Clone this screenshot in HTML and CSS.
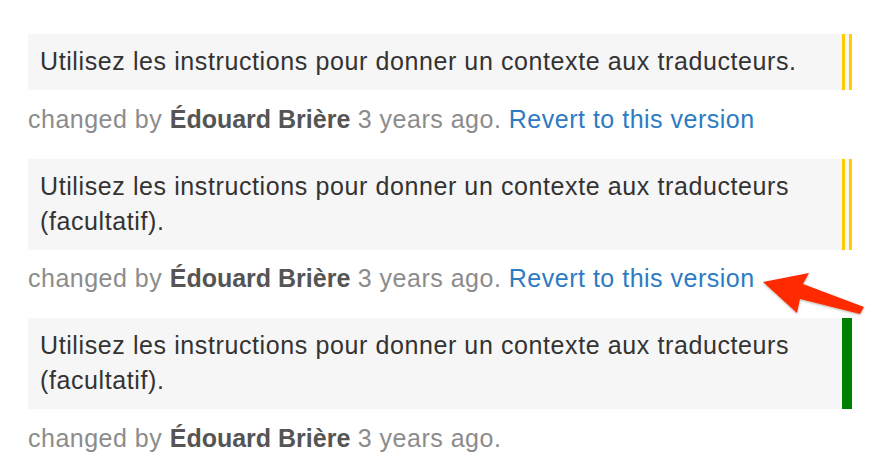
FILE: index.html
```html
<!DOCTYPE html>
<html lang="fr">
<head>
<meta charset="utf-8">
<link rel="stylesheet" href="styles.css">
</head>
<body>
<div class="history">
  <div class="entry">
    <div class="text changed">Utilisez les instructions pour donner un contexte aux traducteurs.</div>
    <div class="meta">changed by <strong>Édouard Brière</strong> 3 years ago. <a href="#">Revert to this version</a></div>
  </div>
  <div class="entry">
    <div class="text changed">Utilisez les instructions pour donner un contexte aux traducteurs (facultatif).</div>
    <div class="meta">changed by <strong>Édouard Brière</strong> 3 years ago. <a href="#">Revert to this version</a></div>
  </div>
  <div class="entry">
    <div class="text current">Utilisez les instructions pour donner un contexte aux traducteurs (facultatif).</div>
    <div class="meta">changed by <strong>Édouard Brière</strong> 3 years ago.</div>
  </div>
  <svg class="arrow" width="878" height="476" viewBox="0 0 878 476" aria-hidden="true">
    <defs>
      <filter id="sh" x="-20%" y="-20%" width="140%" height="140%">
        <feDropShadow dx="0" dy="1" stdDeviation="1" flood-color="#000" flood-opacity="0.3"/>
      </filter>
    </defs>
    <polygon points="763,282 809,273 803,284 864,307 860,314 800,299 797,313" fill="#ff2a00" filter="url(#sh)"/>
  </svg>
</div>
</body>
</html>
```

FILE: styles.css
```css
html, body {
  margin: 0;
  padding: 0;
  background: #fff;
}
body {
  font-family: "Helvetica Neue", "Liberation Sans", Arial, sans-serif;
  font-size: 25px;
  letter-spacing: 0.6px;
  line-height: 35px;
}
.history {
  position: relative;
  width: 824px;
  padding: 34px 0 0 28px;
}
.text {
  background: #f6f6f6;
  color: #333;
  padding: 10px 12px 11px 12px;
}
.text.changed {
  border-right: 10px double #ffcc00;
}
.text.current {
  border-right: 10px solid #008000;
}
.meta {
  color: #8c8c8c;
  margin: 11.5px 0 22px 0;
  letter-spacing: 0.5px;
}
.meta strong {
  color: #555;
  font-weight: bold;
  letter-spacing: 0;
}
.meta a {
  color: #2c7bc4;
  text-decoration: none;
}
.arrow {
  position: absolute;
  left: 0;
  top: 0;
  pointer-events: none;
}
```
